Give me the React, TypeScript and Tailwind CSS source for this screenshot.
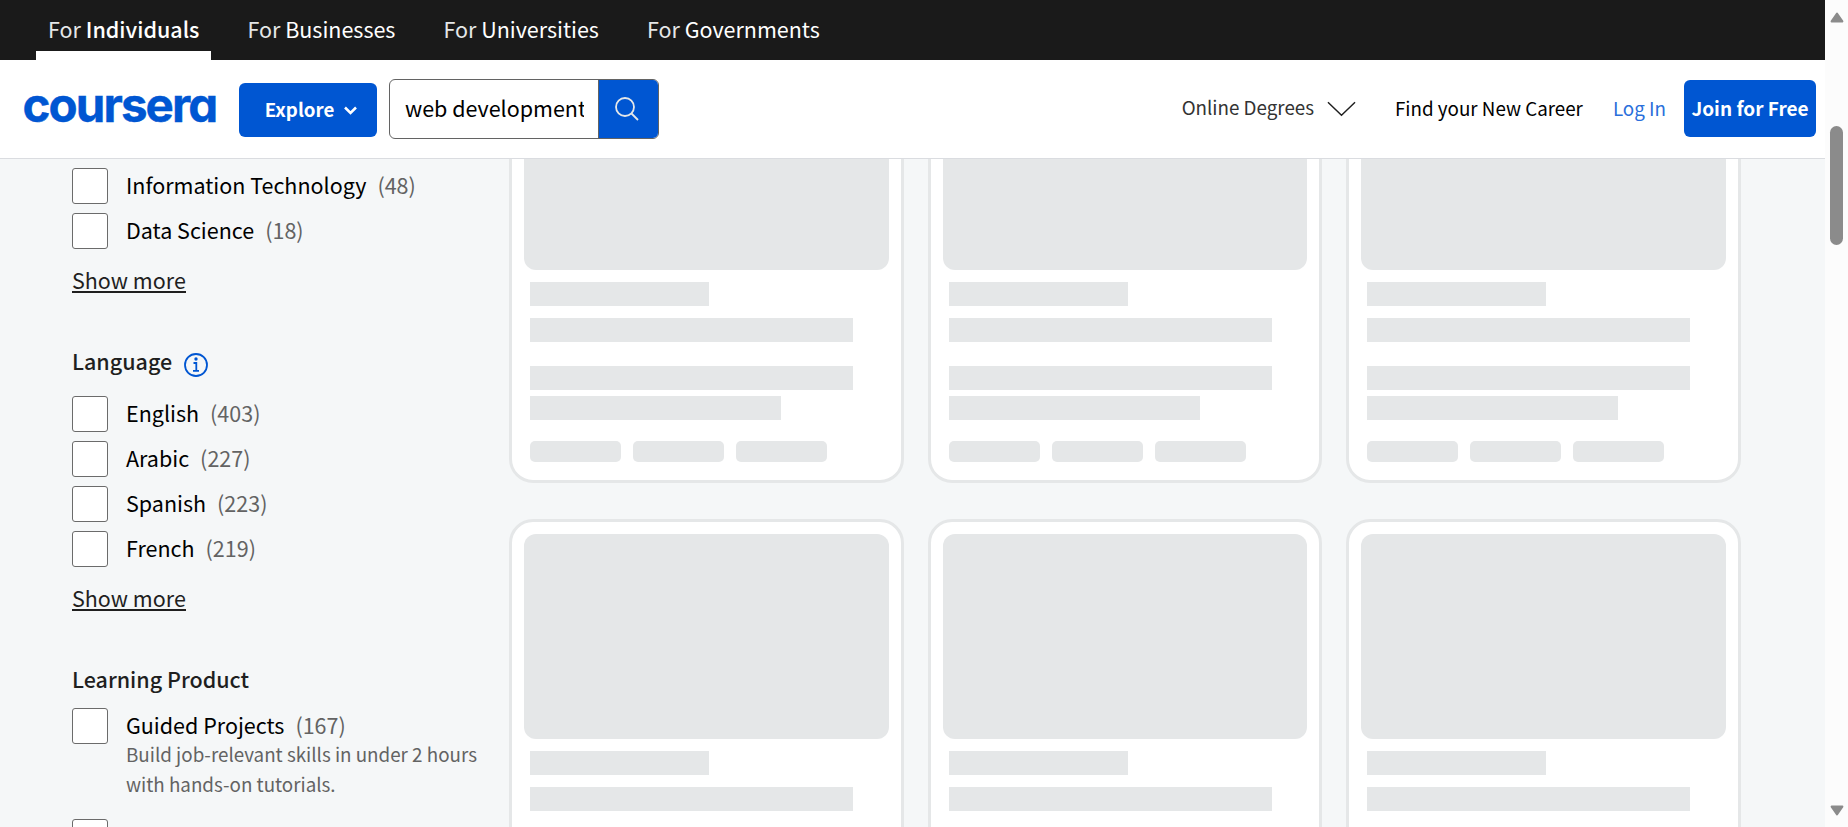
import React from "react";

const font = "font-['Noto_Sans_CJK_SC','Noto_Sans',sans-serif]";

function Arrow({ down }: { down?: boolean }) {
  return (
    <svg width="14" height="11" viewBox="0 0 14 11" className={down ? "rotate-180" : ""}>
      <path d="M7 1.6 L12.4 9.4 H1.6 Z" fill="#8b8b8b" stroke="#8b8b8b" strokeWidth="2" strokeLinejoin="round" />
    </svg>
  );
}

function TopLink({ label, active }: { label: string; active?: boolean }) {
  return (
    <a className="relative flex h-[60px] items-center px-3 pb-0.5 text-[21.5px] leading-[30px] text-white">
      <span className="whitespace-pre">
        <span className="text-[#e5e7e8]">For </span>
        <span className={active ? "font-medium" : "font-normal"}>{label}</span>
      </span>
      {active && <span className="absolute inset-x-0 bottom-0 h-[9px] bg-white" />}
    </a>
  );
}

function Checkbox() {
  return <span className="block h-9 w-9 shrink-0 rounded-[3px] border border-[#6b6b6b] bg-white" />;
}

function Option({ label, count, note }: { label: string; count: number; note?: string }) {
  return (
    <div className="flex gap-[18px]">
      <Checkbox />
      <div className="pt-[2px]">
        <div className="flex h-[30px] items-center gap-[11px] whitespace-nowrap text-[21.5px] leading-[30px]">
          <span className="text-black">{label}</span>
          <span className="text-[#636363]">({count})</span>
        </div>
        {note && <p className="-mt-px mb-px w-[360px] text-[18.8px] leading-[30px] text-[#636363]">{note}</p>}
      </div>
    </div>
  );
}

function ShowMore() {
  return (
    <a className="block w-fit whitespace-nowrap border-b-2 border-[#1f1f1f] text-[21.5px] leading-[22px] text-[#1f1f1f]">Show more</a>
  );
}

function SkeletonCard() {
  return (
    <div className="h-[433px] rounded-[24px] border-[3px] border-[#e5e7e8] bg-white p-3">
      <div className="h-[205px] rounded-xl bg-[#e5e7e8]" />
      <div className="flex flex-col px-1.5 pt-3">
        <div className="h-6 w-[179px] bg-[#e5e7e8]" />
        <div className="mt-3 h-6 w-[323px] bg-[#e5e7e8]" />
        <div className="mt-6 h-6 w-[323px] bg-[#e5e7e8]" />
        <div className="mt-1.5 h-6 w-[251px] bg-[#e5e7e8]" />
        <div className="mt-[21px] flex gap-3">
          <div className="h-[21px] w-[91px] rounded-[5px] bg-[#e5e7e8]" />
          <div className="h-[21px] w-[91px] rounded-[5px] bg-[#e5e7e8]" />
          <div className="h-[21px] w-[91px] rounded-[5px] bg-[#e5e7e8]" />
        </div>
      </div>
    </div>
  );
}

export default function App() {
  return (
    <div className={`flex h-[827px] w-full overflow-hidden bg-[#f5f7f8] ${font}`}>
      <div className="flex min-w-0 flex-1 flex-col">
        <nav className="flex h-[60px] shrink-0 gap-6 bg-[#1a1a1a] pl-9">
          <TopLink label="Individuals" active />
          <TopLink label="Businesses" />
          <TopLink label="Universities" />
          <TopLink label="Governments" />
        </nav>
        <header className="flex h-[99px] shrink-0 items-center justify-between border-b border-[#dadce0] bg-white pl-6 pr-[9px]">
          <div className="flex items-center">
            <span className="-mt-[9px] -ml-[1.5px] w-[192.5px] whitespace-nowrap font-[Inter] text-[47.5px] font-bold leading-[60px] tracking-[-1.9px] text-[#0056d2] [-webkit-text-stroke:0.4px_#0056d2] [font-feature-settings:'cv11']">coursera</span>
            <button className="ml-6 mt-0.5 flex h-[54px] w-[138px] items-center justify-center gap-2.5 rounded-md bg-[#0056d2] pl-1.5 text-[18.7px] font-bold text-white">
              <span className="-mt-px">Explore</span>
              <svg width="13" height="9" viewBox="0 0 13 9" fill="none"><path d="M1 1.5 L6.5 7 L12 1.5" stroke="white" strokeWidth="2.5" /></svg>
            </button>
            <div className="ml-3 flex h-[60px] w-[270px] overflow-hidden rounded-md border border-[#636363]">
              <div className="flex w-[209px] shrink-0 items-center border-r border-[#636363] pb-0.5 pl-[15px]">
                <span className="w-[178.5px] overflow-hidden whitespace-nowrap text-[21.5px] leading-[30px] text-black">web development</span>
              </div>
              <div className="flex flex-1 items-center justify-center bg-[#0056d2] pr-[3px]">
                <svg width="24" height="24" viewBox="0 0 24 24" fill="none" stroke="#e5e7e8" strokeWidth="1.8"><circle cx="10" cy="10" r="9" /><path d="M16.5 16.5 L23 23" /></svg>
              </div>
            </div>
          </div>
          <div className="flex items-center text-[18.8px] leading-[30px]">
            <span className="-mt-1 text-[#333]">Online Degrees</span>
            <svg className="ml-[13px]" width="29" height="16" viewBox="0 0 30 16" fill="none"><path d="M1 1 L15 14.5 L29 1" stroke="#1f1f1f" strokeWidth="1.5" /></svg>
            <span className="-mt-0.5 ml-[39px] text-black">Find your New Career</span>
            <span className="-mt-0.5 ml-[30px] text-[#2a6fdb]">Log In</span>
            <button className="-mt-px ml-[18px] h-[57px] w-[132px] rounded-md bg-[#0056d2] pb-px text-[19px] font-bold text-white">Join for Free</button>
          </div>
        </header>
        <main className="flex min-h-0 flex-1 overflow-hidden">
          <aside className="w-[509px] shrink-0 pl-[72px] pt-[9px]">
            <div className="flex flex-col gap-[9px]">
              <Option label="Information Technology" count={48} />
              <Option label="Data Science" count={18} />
            </div>
            <div className="pt-5"><ShowMore /></div>
            <h3 className="mt-[53px] flex h-[30px] items-center gap-3 text-[21.5px] font-medium leading-[30px] text-[#1f1f1f]">
              <span>Language</span>
              <svg className="mt-[7px]" width="24" height="24" viewBox="0 0 24 24" fill="none" stroke="#0056d2" strokeWidth="1.8"><circle cx="12" cy="12" r="11" /><path d="M9.5 10 H12.3 V17.5 M9 17.8 H15" /><circle cx="12" cy="6" r="0.8" fill="#0056d2" /></svg>
            </h3>
            <div className="mt-5 flex flex-col gap-[9px]">
              <Option label="English" count={403} />
              <Option label="Arabic" count={227} />
              <Option label="Spanish" count={223} />
              <Option label="French" count={219} />
            </div>
            <div className="pt-5"><ShowMore /></div>
            <h3 className="mt-[53px] h-[30px] w-fit text-[21.5px] font-medium leading-[30px] text-[#1f1f1f]">Learning Product</h3>
            <div className="mt-[14px] flex flex-col gap-[19px]">
              <Option label="Guided Projects" count={167} note="Build job-relevant skills in under 2 hours with hands-on tutorials." />
              <Checkbox />
            </div>
          </aside>
          <section className="-mt-[109px] grid w-[1232px] shrink-0 grid-cols-3 content-start gap-x-6 gap-y-9">
            {[0, 1, 2, 3, 4, 5].map((i) => <SkeletonCard key={i} />)}
          </section>
        </main>
      </div>
      <div className="flex w-[23px] shrink-0 flex-col items-center bg-[#fcfcfc] pt-[12px]">
        <Arrow />
        <div className="mt-[103px] h-[119px] w-[13px] rounded-full bg-[#8b8b8b]" />
        <div className="mt-auto pb-[11px]"><Arrow down /></div>
      </div>
    </div>
  );
}
